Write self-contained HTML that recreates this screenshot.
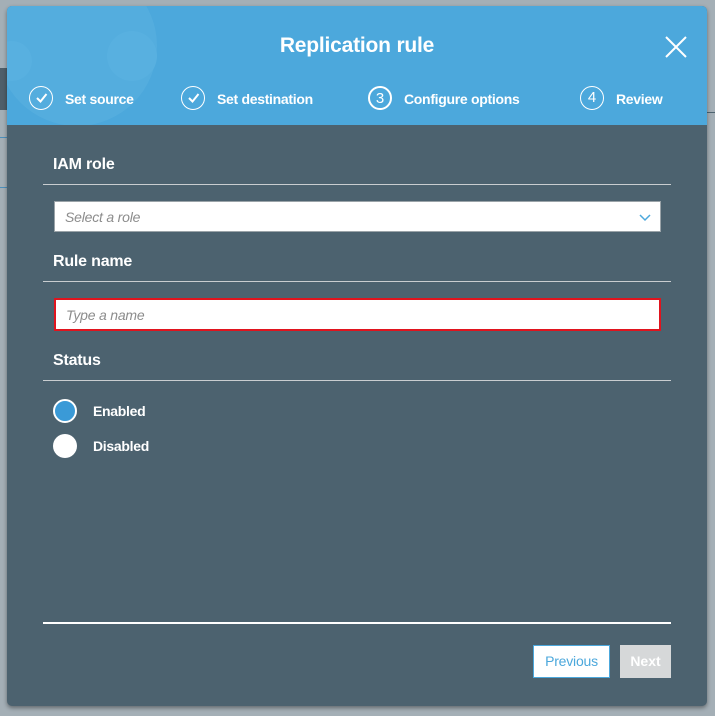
<!DOCTYPE html>
<html><head><style>
*{box-sizing:border-box;margin:0;padding:0}
body{width:715px;height:716px;background:#a4afb6;position:relative;overflow:hidden;font-family:"Liberation Sans",sans-serif}
.abs{position:absolute}
.modal{left:7px;top:6px;width:700px;height:700px;background:#4c626f;border-radius:5px;overflow:hidden;box-shadow:0 2px 4px rgba(0,0,0,.4)}
.hdr{left:0;top:0;width:700px;height:119px;background:#4ca8dc}
.t{color:#fff;font-weight:bold}
.s{font-size:14px;letter-spacing:-0.3px}
.circ{width:24px;height:24px;border-radius:50%;border:1.5px solid #fff;color:#fff;font-size:15px;text-align:center;line-height:21px}
.line{height:1px;background:#c9cdd0;left:36px;width:628px}
.lbl{font-size:16px;left:46px;letter-spacing:-0.2px}
.inp{background:#fff;left:47px;width:607px;height:31px;border:1px solid #9aa3a8;font-style:italic;color:#8c8c8c;font-size:14px;padding:7px 10px;letter-spacing:-0.2px}
</style></head><body>
<div class="abs" style="left:0;top:68px;width:7px;height:42px;background:#4f5f6a"></div>
<div class="abs" style="left:707px;top:112px;width:8px;height:1px;background:#4f6470"></div>
<div class="abs" style="left:0;top:137px;width:7px;height:1px;background:#4c8fbb"></div>
<div class="abs" style="left:0;top:187px;width:7px;height:1px;background:#4c8fbb"></div>
<div class="abs modal">
 <div class="abs hdr">
  <svg class="abs" style="left:0;top:0" width="200" height="119"><circle cx="70" cy="40" r="80" fill="#54adde"/><circle cx="125" cy="50" r="25" fill="#58b0e0"/><circle cx="5" cy="55" r="20" fill="#58b0e0"/></svg>
  <div class="abs t" style="left:0;width:700px;top:28px;text-align:center;font-size:21px;letter-spacing:-0.2px">Replication rule</div>
  <svg class="abs" style="left:658px;top:30px" width="22" height="22"><path d="M1 1L21 21M21 1L1 21" stroke="#fff" stroke-width="2"/></svg>
  <div class="abs circ" style="left:22px;top:80px"><svg width="21" height="21"><path d="M6 11l3.5 3.5L15.5 7" stroke="#fff" stroke-width="2" fill="none"/></svg></div>
  <div class="abs t s" style="left:58px;top:85px">Set source</div>
  <div class="abs circ" style="left:174px;top:80px"><svg width="21" height="21"><path d="M6 11l3.5 3.5L15.5 7" stroke="#fff" stroke-width="2" fill="none"/></svg></div>
  <div class="abs t s" style="left:210px;top:85px">Set destination</div>
  <div class="abs circ" style="left:361px;top:80px;border-width:2px">3</div>
  <div class="abs t s" style="left:397px;top:85px">Configure options</div>
  <div class="abs circ" style="left:573px;top:80px;border-width:1px">4</div>
  <div class="abs t s" style="left:609px;top:85px">Review</div>
 </div>
 <div class="abs t lbl" style="top:150px">IAM role</div>
 <div class="abs line" style="top:178px"></div>
 <div class="abs inp" style="top:195px">Select a role<svg class="abs" style="right:9px;top:12px" width="12" height="8"><path d="M1 1l5 5 5-5" stroke="#4ca8dc" stroke-width="1.5" fill="none"/></svg></div>
 <div class="abs t lbl" style="top:247px">Rule name</div>
 <div class="abs line" style="top:275px"></div>
 <div class="abs inp" style="top:292px;height:33px;border:2px solid #e0141e;padding-top:7px">Type a name</div>
 <div class="abs t lbl" style="top:346px">Status</div>
 <div class="abs line" style="top:374px"></div>
 <div class="abs" style="left:46px;top:393px;width:24px;height:24px;border-radius:50%;background:#3a9ad7;border:2px solid #fff"></div>
 <div class="abs t s" style="left:86px;top:397px">Enabled</div>
 <div class="abs" style="left:46px;top:428px;width:24px;height:24px;border-radius:50%;background:#fff"></div>
 <div class="abs t s" style="left:86px;top:432px">Disabled</div>
 <div class="abs" style="left:36px;top:616px;width:628px;height:2px;background:#fff"></div>
 <div class="abs" style="left:526px;top:639px;width:77px;height:33px;background:#fff;border:1px solid #4ca8dc;color:#4ca8dc;font-size:14px;text-align:center;line-height:31px;letter-spacing:-0.2px">Previous</div>
 <div class="abs" style="left:613px;top:639px;width:51px;height:33px;background:#d6d8d9;color:#fff;font-weight:bold;font-size:14px;text-align:center;line-height:33px">Next</div>
</div>
</body></html>
